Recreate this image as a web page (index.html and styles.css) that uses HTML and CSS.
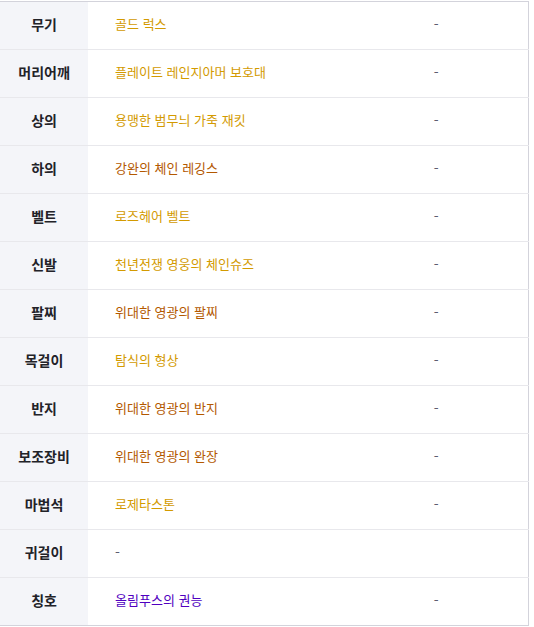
FILE: index.html
```html
<!DOCTYPE html>
<html lang="ko">
<head>
<meta charset="utf-8">
<link rel="stylesheet" href="styles.css">
</head>
<body>
<table class="equip">
  <colgroup><col class="c-label"><col class="c-item"><col class="c-extra"></colgroup>
  <tbody>
    <tr><th>무기</th><td class="item gold">골드 럭스</td><td class="extra">-</td></tr>
    <tr><th>머리어깨</th><td class="item gold">플레이트 레인지아머 보호대</td><td class="extra">-</td></tr>
    <tr><th>상의</th><td class="item gold">용맹한 범무늬 가죽 재킷</td><td class="extra">-</td></tr>
    <tr><th>하의</th><td class="item brown">강완의 체인 레깅스</td><td class="extra">-</td></tr>
    <tr><th>벨트</th><td class="item gold">로즈헤어 벨트</td><td class="extra">-</td></tr>
    <tr><th>신발</th><td class="item gold">천년전쟁 영웅의 체인슈즈</td><td class="extra">-</td></tr>
    <tr><th>팔찌</th><td class="item brown">위대한 영광의 팔찌</td><td class="extra">-</td></tr>
    <tr><th>목걸이</th><td class="item gold">탐식의 형상</td><td class="extra">-</td></tr>
    <tr><th>반지</th><td class="item brown">위대한 영광의 반지</td><td class="extra">-</td></tr>
    <tr><th>보조장비</th><td class="item brown">위대한 영광의 완장</td><td class="extra">-</td></tr>
    <tr><th>마법석</th><td class="item gold">로제타스톤</td><td class="extra">-</td></tr>
    <tr><th>귀걸이</th><td class="item none">-</td><td class="extra"></td></tr>
    <tr><th>칭호</th><td class="item purple">올림푸스의 권능</td><td class="extra">-</td></tr>
  </tbody>
</table>
</body>
</html>
```
FILE: styles.css
```css
html, body {
  margin: 0;
  padding: 0;
  background: #ffffff;
}
body {
  padding-top: 1px;
  font-family: "Noto Sans CJK KR", "Noto Sans", sans-serif;
}
.equip {
  width: 529px;
  border-collapse: collapse;
  table-layout: fixed;
  border-top: 1px solid #d3d3db;
  border-right: 1px solid #d3d3db;
  border-bottom: 1px solid #d3d3db;
}
.c-label { width: 88px; }
.c-item { width: 256px; }
.c-extra { width: 184px; }
.equip tr { height: 48px; }
.equip th, .equip td {
  padding: 0 0 3px 0;
  height: 44px;
  border-bottom: 1px solid #e8e8ec;
  vertical-align: middle;
  line-height: 16px;
}
.equip tr:last-child th, .equip tr:last-child td {
  border-bottom: none;
}
.equip th {
  background: #f4f5f9;
  color: #222228;
  font-size: 14px;
  font-weight: 700;
  text-align: center;
}
.equip .item {
  padding-left: 27px;
  font-size: 13px;
  text-align: left;
  white-space: nowrap;
}
.gold { color: #d39a00; }
.brown { color: #b35800; }
.purple { color: #5000c0; }
.equip .none { color: #5d5d70; font-size: 14px; }
.extra {
  font-size: 14px;
  text-align: center;
  color: #5d5d70;
}
```
